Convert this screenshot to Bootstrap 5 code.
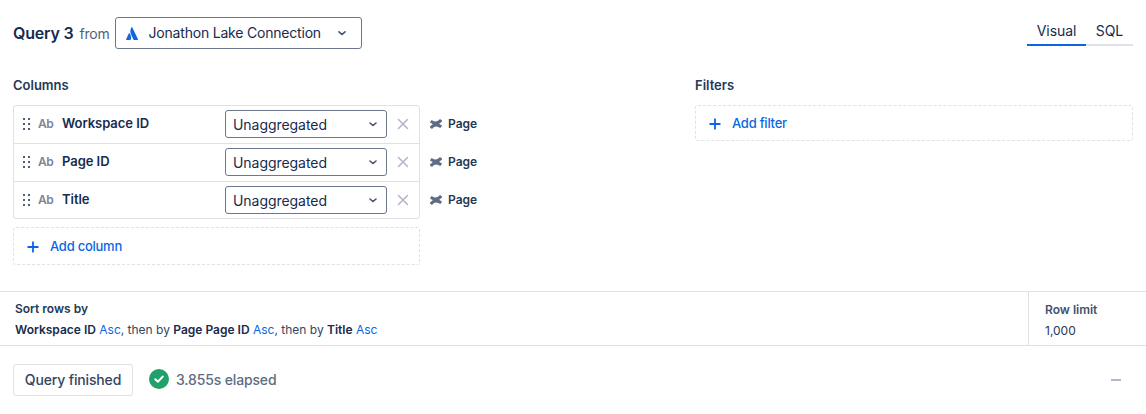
<!doctype html>
<html lang="en"><head><meta charset="utf-8"><title>Query 3</title>
<link rel="stylesheet" href="https://cdn.jsdelivr.net/npm/bootstrap@5.3.0/dist/css/bootstrap.min.css">
<style>
html,body{width:1146px;height:414px;overflow:hidden;background:#fff}
body{font-family:Inter,"Liberation Sans",sans-serif;color:#172b4d;font-size:14px}
.qhead{height:66px;padding:17px 13px 0 13px}
.qtitle{font-size:16px;font-weight:600;line-height:32px;letter-spacing:-.2px}
.qfrom{font-size:14px;color:#505f79;line-height:34px;margin-left:6px;margin-right:5px;letter-spacing:-.2px}
.connbtn{width:247px;height:32px;border:1px solid #6b778c;border-radius:3px;padding:0 13px 0 10px;font-size:14px;line-height:30px;color:#172b4d;letter-spacing:-.2px}
.connbtn .cname{margin-left:11px}
.qtabs{height:29px;align-self:flex-start;border-bottom:2px solid #dfe1e6;font-size:14px}
.qtab{line-height:27px;height:29px;margin-bottom:-2px;text-align:center;letter-spacing:-.1px}
.qtab-on{width:59px;border-bottom:2px solid #0c66e4}
.qtab-sql{width:47px}
.qbody{padding:0 13px;height:225px}
.leftpane{width:682px}
.rightpane{width:438px}
.seclabel{font-size:13px;font-weight:600;line-height:20px;height:20px;margin-top:9px;color:#253858;margin-bottom:10px}
.collist{width:407px;border:1px solid #dfe1e6;border-radius:3px}
.colrow{height:38px;padding:0 0 1px 9px}
.colrow:first-child{height:37px}
.colrow:last-child{height:37px;padding-bottom:0}
.colrow + .colrow{border-top:1px solid #dfe1e6}
.dots{width:8px;height:12px;flex:none}
.abtype{font-size:12px;font-weight:600;color:#7a869a;width:16px;margin-left:7px;letter-spacing:-.5px}
.fname{font-size:13px;font-weight:600;margin-left:8px;color:#172b4d;width:163px;letter-spacing:-.05px}
.aggsel{width:162px;height:28px;border:1px solid #6b778c;border-radius:3px;padding:1px 7px 0 7px;font-size:14px;line-height:26px;letter-spacing:-.05px}
.rmx{margin-left:10px;flex:none}
.srclist{margin-left:10px;padding-top:1px}
.srcrow{height:38px;padding-bottom:1px;font-size:12px;font-weight:600;color:#253858}
.srcrow:first-child{height:37px}
.srcrow:last-child{height:37px;padding-top:1px;padding-bottom:0}
.srcrow svg{margin-right:6px}
.addbox{border:1px dashed #dfe1e6;border-radius:3px;padding-left:13px;padding-top:1px;color:#0c66e4;font-size:13px;font-weight:500;letter-spacing:-.25px}
.addbox svg{margin-right:11px}
.addcol{width:407px;height:38px;margin-top:8px}
.addfil{height:36px}
.sortbar{height:55px;border-top:1px solid #dfe1e6;border-bottom:1px solid #dfe1e6}
.sortmain{width:1028px;padding:8px 15px 0;font-size:12px}
.sorthd{font-weight:600;line-height:18px;color:#253858}
.sortln{line-height:18px;margin-top:3px;color:#344563}
.sortln b{font-weight:600;color:#172b4d}
.sortln a{color:#0c66e4;text-decoration:none}
.limitbox{border-left:1px solid #dfe1e6;padding:9px 16px 0;font-size:12px}
.limithd{font-weight:600;color:#42526e;line-height:18px}
.limitval{line-height:18px;margin-top:3px;color:#253858}
.qfoot{height:68px;padding:18px 13px 0}
.finbtn{width:120px;height:32px;border:1px solid #dfe1e6;border-radius:3px;font-size:14px;font-weight:500;color:#344563;line-height:30px;text-align:center;letter-spacing:-.15px}
.elapsed{font-size:14px;font-weight:500;color:#5e6c84;margin-left:7px;letter-spacing:-.15px;position:relative;top:-1px}
.okic{margin-left:16px;position:relative;top:-1px}
.minus{width:10px;height:2px;background:#b3b9c9;margin:15px 12px 0 0}
</style></head><body>
<div class="qhead d-flex justify-content-between">
  <div class="d-flex align-items-start">
    <span class="qtitle">Query 3</span><span class="qfrom">from</span>
    <div class="connbtn d-flex align-items-center justify-content-between">
      <span class="d-flex align-items-center">
        <svg width="12" height="13" viewBox="0 0 12 13"><path fill="#1868db" d="M3.500 6.200c-.2-.2-.5-.2-.6.1L.1 12.300c-.1.300 0 .6.400.6h3.800c.2 0 .4-.1.500-.3.800-1.900.3-4.800-1.300-6.400z"/><path fill="#0c66e4" d="M5.500.3C4 2.800 4.100 5.500 5.100 7.500l2.300 5c.1.300.3.400.6.400h3.600c.3 0 .5-.3.400-.6L6.200.3C6 0 5.700 0 5.500.3z"/></svg>
        <span class="cname">Jonathon Lake Connection</span>
      </span>
      <svg width="12" height="12" viewBox="0 0 12 12"><path d="M3 4.800 6 7.500l3-2.700" fill="none" stroke="#42526e" stroke-width="1.600" stroke-linecap="round" stroke-linejoin="round"/></svg>
    </div>
  </div>
  <div class="qtabs d-flex">
    <div class="qtab qtab-on">Visual</div><div class="qtab qtab-sql">SQL</div>
  </div>
</div>
<div class="qbody d-flex">
  <div class="leftpane">
    <div class="seclabel">Columns</div>
    <div class="d-flex">
      <div class="collist">
        <div class="colrow d-flex align-items-center">
          <svg class="dots" viewBox="0 0 8 12"><g fill="#505f79"><rect width="2" height="2"/><rect x="5" width="2" height="2"/><rect y="5" width="2" height="2"/><rect x="5" y="5" width="2" height="2"/><rect y="10" width="2" height="2"/><rect x="5" y="10" width="2" height="2"/></g></svg>
          <span class="abtype">Ab</span><span class="fname">Workspace ID</span>
          <div class="aggsel d-flex align-items-center justify-content-between"><span>Unaggregated</span><svg width="12" height="12" viewBox="0 0 12 12"><path d="M3 4 6 6.500 9 4" fill="none" stroke="#42526e" stroke-width="1.600" stroke-linecap="round" stroke-linejoin="round"/></svg></div>
          <svg class="rmx" width="12" height="12" viewBox="0 0 12 12"><path d="M1.500 1.500l9 9m0-9-9 9" stroke="#b3b9c4" stroke-width="1.600" stroke-linecap="round"/></svg>
        </div>
        <div class="colrow d-flex align-items-center">
          <svg class="dots" viewBox="0 0 8 12"><g fill="#505f79"><rect width="2" height="2"/><rect x="5" width="2" height="2"/><rect y="5" width="2" height="2"/><rect x="5" y="5" width="2" height="2"/><rect y="10" width="2" height="2"/><rect x="5" y="10" width="2" height="2"/></g></svg>
          <span class="abtype">Ab</span><span class="fname">Page ID</span>
          <div class="aggsel d-flex align-items-center justify-content-between"><span>Unaggregated</span><svg width="12" height="12" viewBox="0 0 12 12"><path d="M3 4 6 6.500 9 4" fill="none" stroke="#42526e" stroke-width="1.600" stroke-linecap="round" stroke-linejoin="round"/></svg></div>
          <svg class="rmx" width="12" height="12" viewBox="0 0 12 12"><path d="M1.500 1.500l9 9m0-9-9 9" stroke="#b3b9c4" stroke-width="1.600" stroke-linecap="round"/></svg>
        </div>
        <div class="colrow d-flex align-items-center">
          <svg class="dots" viewBox="0 0 8 12"><g fill="#505f79"><rect width="2" height="2"/><rect x="5" width="2" height="2"/><rect y="5" width="2" height="2"/><rect x="5" y="5" width="2" height="2"/><rect y="10" width="2" height="2"/><rect x="5" y="10" width="2" height="2"/></g></svg>
          <span class="abtype">Ab</span><span class="fname">Title</span>
          <div class="aggsel d-flex align-items-center justify-content-between"><span>Unaggregated</span><svg width="12" height="12" viewBox="0 0 12 12"><path d="M3 4 6 6.500 9 4" fill="none" stroke="#42526e" stroke-width="1.600" stroke-linecap="round" stroke-linejoin="round"/></svg></div>
          <svg class="rmx" width="12" height="12" viewBox="0 0 12 12"><path d="M1.500 1.500l9 9m0-9-9 9" stroke="#b3b9c4" stroke-width="1.600" stroke-linecap="round"/></svg>
        </div>
      </div>
      <div class="srclist">
        <div class="srcrow d-flex align-items-center"><svg width="12" height="12" viewBox="0 0 12 12"><path d="M.8 10C3.500 6.500 6.500 5.500 11.200 8.800M11.200 2C8.500 5.500 5.500 6.500.8 3.200" fill="none" stroke="#5e6c84" stroke-width="3"/></svg>Page</div>
        <div class="srcrow d-flex align-items-center"><svg width="12" height="12" viewBox="0 0 12 12"><path d="M.8 10C3.500 6.500 6.500 5.500 11.200 8.800M11.200 2C8.500 5.500 5.500 6.500.8 3.200" fill="none" stroke="#5e6c84" stroke-width="3"/></svg>Page</div>
        <div class="srcrow d-flex align-items-center"><svg width="12" height="12" viewBox="0 0 12 12"><path d="M.8 10C3.500 6.500 6.500 5.500 11.200 8.800M11.200 2C8.500 5.500 5.500 6.500.8 3.200" fill="none" stroke="#5e6c84" stroke-width="3"/></svg>Page</div>
      </div>
    </div>
    <div class="addbox addcol d-flex align-items-center">
      <svg width="12" height="12" viewBox="0 0 12 12"><path d="M6 .5v11M.5 6h11" stroke="#0c66e4" stroke-width="1.800"/></svg>Add column
    </div>
  </div>
  <div class="rightpane">
    <div class="seclabel">Filters</div>
    <div class="addbox addfil d-flex align-items-center">
      <svg width="12" height="12" viewBox="0 0 12 12"><path d="M6 .5v11M.5 6h11" stroke="#0c66e4" stroke-width="1.800"/></svg>Add filter
    </div>
  </div>
</div>
<div class="sortbar d-flex">
  <div class="sortmain">
    <div class="sorthd">Sort rows by</div>
    <div class="sortln"><b>Workspace ID</b> <a href="#">Asc</a>, then by <b>Page Page ID</b> <a href="#">Asc</a>, then by <b>Title</b> <a href="#">Asc</a></div>
  </div>
  <div class="limitbox flex-grow-1">
    <div class="limithd">Row limit</div>
    <div class="limitval">1,000</div>
  </div>
</div>
<div class="qfoot d-flex align-items-start justify-content-between">
  <div class="d-flex align-items-center">
    <div class="finbtn">Query finished</div>
    <svg class="okic" width="20" height="20" viewBox="0 0 20 20"><circle cx="10" cy="10" r="10" fill="#22a06b"/><path d="M6.300 10.200 8.900 12.700 13.700 7.600" fill="none" stroke="#fff" stroke-width="2" stroke-linecap="round" stroke-linejoin="round"/></svg>
    <span class="elapsed">3.855s elapsed</span>
  </div>
  <div class="minus"></div>
</div>
</body></html>
